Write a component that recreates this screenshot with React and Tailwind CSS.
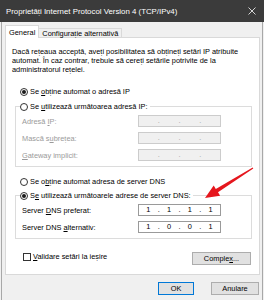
import React from 'react';

const font = { fontFamily: '"Liberation Sans", Arial, sans-serif' };

// Radio button drawn with css circles
const Radio = ({ checked }) => (
  <span className="w-[8px] h-[8px] rounded-full border border-[#333333] bg-white flex items-center justify-center shrink-0">
    {checked && <span className="w-[4px] h-[4px] rounded-full bg-[#1a1a1a]" />}
  </span>
);

const RadioRow = ({ checked, pre, ul, post }) => (
  <div className="flex items-center gap-[2px] h-[9px]">
    <Radio checked={checked} />
    <span className="whitespace-nowrap">
      {pre}
      <span className="underline underline-offset-1">{ul}</span>
      {post}
    </span>
  </div>
);

// IP address field with 4 segments
const IpField = ({ values, disabled }) => (
  <div
    className={
      'w-[83px] h-[12px] border flex items-center ' +
      (disabled ? 'bg-[#f0f0f0] border-[#cccccc] text-[#a0a0a0]' : 'bg-white border-[#9a9a9a] text-black')
    }
  >
    {[0, 1, 2, 3].map((i) => (
      <React.Fragment key={i}>
        {i > 0 && <span className="w-[2px] text-center leading-none">.</span>}
        <span className="flex-1 text-center leading-none">{values ? values[i] : ''}</span>
      </React.Fragment>
    ))}
  </div>
);

const FieldRow = ({ label, ul, rest, pre = '', values, disabled }) => (
  <div className="flex items-center pl-[2px]">
    <span className={'w-[116px] whitespace-nowrap ' + (disabled ? 'text-[#9a9a9a]' : 'text-black')}>
      {pre}
      <span className="underline underline-offset-1">{ul}</span>
      {rest}
    </span>
    <IpField values={values} disabled={disabled} />
  </div>
);

export default function App() {
  return (
    <div className="w-[264px] h-[300px] bg-[#f0f0f0] flex flex-col relative overflow-hidden text-[7.4px] leading-[9px] text-black" style={font}>
      {/* Title bar */}
      <div className="h-[22px] bg-[#3b3b3b] flex items-center justify-between pl-[6px] pr-[8px] text-[7.85px] text-white">
        <span className="whitespace-nowrap">Proprietăți Internet Protocol Version 4 (TCP/IPv4)</span>
        <svg width="8" height="8" viewBox="0 0 8 8" className="mr-[0px]">
          <path d="M0.5 0.5 L7.5 7.5 M7.5 0.5 L0.5 7.5" stroke="#e6e6e6" strokeWidth="0.9" fill="none" />
        </svg>
      </div>

      {/* Window body */}
      <div className="flex-1 mx-[1px] border-x border-[#a8a8a8] flex flex-col">
        {/* Tabs */}
        <div className="flex items-end h-[12px] mt-[3px] ml-[3px] relative z-10">
          <div className="h-[13px] -mb-[1px] bg-white border border-b-0 border-[#d9d9d9] px-[3px] flex items-center">
            General
          </div>
          <div className="h-[9px] border border-b-0 border-l-0 border-[#d9d9d9] px-[3px] flex items-center whitespace-nowrap">
            Configurație alternativă
          </div>
        </div>

        {/* Panel */}
        <div className="h-[238px] ml-[3px] mr-[2px] bg-white border border-[#d9d9d9] flex flex-col">
          <p className="pt-[9px] pl-[6px] whitespace-nowrap">
            Dacă rețeaua acceptă, aveți posibilitatea să obțineți setări IP atribuite
            <br />
            automat. În caz contrar, trebuie să cereți setările potrivite de la
            <br />
            administratorul rețelei.
          </p>

          <div className="mt-[13px] pl-[14px]">
            <RadioRow checked pre="Se " ul="o" post="bține automat o adresă IP" />
          </div>

          <fieldset className="mt-[6px] ml-[9px] mr-[7px] border border-[#dcdcdc] pl-[4px] pb-[5px]">
            <legend className="pr-[2px]">
              <RadioRow pre="Se " ul="u" post="tilizează următoarea adresă IP:" />
            </legend>
            <div className="flex flex-col gap-[5px] pt-[4px]">
              <FieldRow disabled pre="Adresă " ul="I" rest="P:" />
              <FieldRow disabled pre="Mască s" ul="u" rest="brețea:" />
              <FieldRow disabled ul="G" rest="ateway implicit:" />
            </div>
          </fieldset>

          <div className="mt-[10px] pl-[14px]">
            <RadioRow pre="Se o" ul="b" post="ține automat adresa de server DNS" />
          </div>

          <fieldset className="mt-[5px] ml-[9px] mr-[7px] border border-[#dcdcdc] pl-[4px] pb-[5px]">
            <legend className="pr-[2px]">
              <RadioRow checked pre="S" ul="e" post=" utilizează următoarele adrese de server DNS:" />
            </legend>
            <div className="flex flex-col gap-[5px] pt-[4px]">
              <FieldRow pre="Server " ul="D" rest="NS preferat:" values={['1', '1', '1', '1']} />
              <FieldRow pre="Server DNS " ul="a" rest="lternativ:" values={['1', '0', '0', '1']} />
            </div>
          </fieldset>

          <div className="mt-[13px] flex items-start justify-between pl-[17px] pr-[8px]">
            <label className="flex items-center gap-[2px] h-[9px]">
              <span className="w-[8px] h-[8px] border border-[#333333] bg-white shrink-0" />
              <span className="whitespace-nowrap">
                <span className="underline underline-offset-1">V</span>alidare setări la ieșire
              </span>
            </label>
            <button className="w-[59px] h-[13px] bg-[#e1e1e1] border border-[#adadad] flex items-center justify-center">
              <span>
                Comple<span className="underline underline-offset-1">x</span>...
              </span>
            </button>
          </div>
        </div>

        {/* Dialog buttons */}
        <div className="mt-[7px] mr-[3px] flex justify-end gap-[17px]">
          <button className="w-[36px] h-[13px] bg-[#e1e1e1] border border-[#0078d7] flex items-center justify-center">
            OK
          </button>
          <button className="w-[48px] h-[13px] bg-[#e1e1e1] border border-[#adadad] flex items-center justify-center">
            Anulare
          </button>
        </div>
      </div>

      {/* Red annotation arrow */}
      <svg className="absolute left-0 top-0 pointer-events-none" width="264" height="300" viewBox="0 0 264 300">
        <polygon
          points="252.7,167.6 215.8,188.9 213.7,185.5 205,198 220.1,195.7 218,192.3 253.3,168.4"
          fill="#e5161d"
        />
      </svg>
    </div>
  );
}
